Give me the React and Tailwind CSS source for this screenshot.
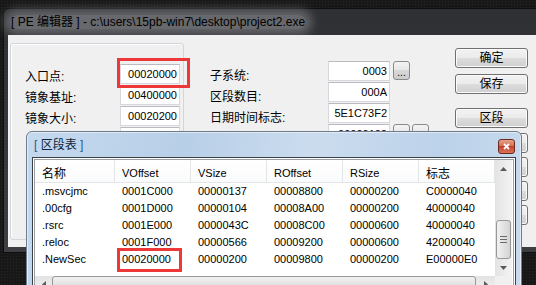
import React from "react";

const FONT = { fontFamily: '"Liberation Sans", "Noto Sans CJK SC", sans-serif' };

// fields from row 4 on lie behind the dialog, only their boxes are drawn
const leftFields = [
  ["入口点:", "00020000"],
  ["镜象基址:", "00400000"],
  ["镜象大小:", "00020200"],
  ["", "00001000"],
  ["", ""],
  ["", ""],
  ["", ""],
  ["", ""],
];

const rightFields = [
  ["子系统:", "0003", 1],
  ["区段数目:", "000A", 0],
  ["日期时间标志:", "5E1C73F2", 0],
  ["", "00000102", 2],
  ["", "", 0],
  ["", "", 0],
  ["", "", 0],
];

const buttons = [
  ["确定", "mt-0"],
  ["保存", "mt-[6px]"],
  ["区段", "mt-[14px]"],
  ["", "mt-[5px]"],
  ["", "mt-[4px]"],
  ["", "mt-[4px]"],
  ["", "mt-[4px]"],
];

const cols = [
  ["名称", "w-[80px]"],
  ["VOffset", "w-[76px]"],
  ["VSize", "w-[76px]"],
  ["ROffset", "w-[76px]"],
  ["RSize", "w-[76px]"],
  ["标志", "w-[76px]"],
];

const rows = [
  [".msvcjmc", "0001C000", "00000137", "00008800", "00000200", "C0000040"],
  [".00cfg", "0001D000", "00000104", "00008A00", "00000200", "40000040"],
  [".rsrc", "0001E000", "0000043C", "00008C00", "00000600", "40000040"],
  [".reloc", "0001F000", "00000566", "00009200", "00000600", "42000040"],
  [".NewSec", "00020000", "00000200", "00009800", "00000200", "E00000E0"],
];

function Edit({ value, w }) {
  return (
    <div
      className={`${w} h-[20px] shrink-0 bg-white border border-[#d6d8dd] border-t-[#b9bbc0] flex items-center justify-end pr-[2px] text-[11px] text-black`}
    >
      {value}
    </div>
  );
}

function SmallBtn() {
  return (
    <div className="w-[17px] h-[19px] rounded-[3px] border border-[#8a8a8a] bg-[linear-gradient(#f4f4f4,#e6e6e6_50%,#d8d8d8_50%,#cdcdcd)] flex items-end justify-center text-[10px] leading-[13px] text-black">
      ...
    </div>
  );
}

function Button({ label, cls }) {
  return (
    <div
      className={`${cls} w-[73px] h-[20px] rounded-[3px] border border-[#707070] bg-[linear-gradient(#f2f2f2,#ebebeb_50%,#dddddd_50%,#cfcfcf)] shadow-[inset_0_0_0_1px_#fbfbfb] flex items-center justify-center text-[12px] text-black`}
    >
      {label}
    </div>
  );
}

function Arrow({ dir }) {
  const pts = {
    up: "0,4 3.5,0 7,4",
    down: "0,0 3.5,4 7,0",
    left: "4,0 0,3.5 4,7",
    right: "0,0 4,3.5 0,7",
  }[dir];
  const vert = dir === "up" || dir === "down";
  return (
    <svg width={vert ? 7 : 4} height={vert ? 4 : 7}>
      <polygon points={pts} fill="#5a5a5a" />
    </svg>
  );
}

export default function App() {
  return (
    <div
      className="relative w-[536px] h-[285px] overflow-hidden bg-[#181818] bg-[radial-gradient(#262626_1px,transparent_1px)] bg-[length:3px_3px]"
      style={FONT}
    >
      {/* main window */}
      <div className="absolute left-[3px] top-[8px] w-[540px] h-[245px] rounded-t-[6px] border border-[#0e0e0e] bg-[linear-gradient(#2e3033,#3c3e41)] flex flex-col">
        <div className="h-[26px] flex items-center pl-[6px]">
          <span className="rounded-[10px] bg-[rgba(150,152,156,0.55)] shadow-[0_0_10px_6px_rgba(150,152,156,0.5)] px-[1px] text-[12px] text-black leading-[14px]">
            [ PE 编辑器 ] - c:\users\15pb-win7\desktop\project2.exe
          </span>
        </div>
        <div className="flex-1 ml-[4px] mb-[5px] bg-[#f0f0f0] flex">
          {/* left group */}
          <div className="ml-[2px] mt-[8px] w-[174px] h-[197px] rounded-[3px] border border-[#d0d6dc] shadow-[inset_1px_1px_0_#ffffff] pt-[20px] pl-[14px] flex flex-col gap-[1px]">
            {leftFields.map(([l, v], i) => (
              <div key={i} className="flex items-start h-[20px]">
                <div className="w-[95px] pt-[6px] text-[12px] leading-[14px] text-black">{l}</div>
                <Edit value={v} w="w-[60px]" />
              </div>
            ))}
          </div>
          {/* right fields */}
          <div className="ml-[26px] mt-[26px] w-[220px] flex flex-col gap-[1px]">
            {rightFields.map(([l, v, b], i) => (
              <div key={i} className="flex items-start h-[20px]">
                <div className="w-[118px] pt-[8px] text-[12px] leading-[14px] text-black">{l}</div>
                <Edit value={v} w="w-[62px]" />
                {b > 0 && (
                  <div className="ml-[3px] flex gap-[2px]">
                    <SmallBtn />
                    {b > 1 && <SmallBtn />}
                  </div>
                )}
              </div>
            ))}
          </div>
          {/* buttons */}
          <div className="ml-[25px] mt-[13px] flex flex-col">
            {buttons.map(([l, c], i) => (
              <Button key={i} label={l} cls={c} />
            ))}
          </div>
        </div>
      </div>

      {/* section table dialog */}
      <div className="absolute z-10 left-[26px] top-[131px] w-[496px] h-[175px] rounded-t-[6px] border border-[#6d7b8a] bg-[linear-gradient(100deg,#c4d9ee,#b8cfe8_30%,#cbdcee_55%,#bcd2ea_80%,#c9dbee)] shadow-[inset_0_0_0_1px_rgba(255,255,255,0.5)] flex flex-col">
        <div className="h-[25px] flex items-start justify-between pl-[7px] pr-[6px] pt-[6px]">
          <span className="text-[12px] text-[#10243a] leading-[14px]">
            <span className="text-[#2a5a8a]">[</span> 区段表 <span className="text-[#2a5a8a]">]</span>
          </span>
          <div className="mt-[1px] w-[17px] h-[15px] rounded-[3px] border border-[#6b2a1c] bg-[linear-gradient(#e8a08a,#d36b50_50%,#c2452b_50%,#d9735a)] flex items-center justify-center">
            <svg width="7" height="7" viewBox="0 0 7 7">
              <path d="M1 1 L6 6 M6 1 L1 6" stroke="#ffffff" strokeWidth="1.8" />
            </svg>
          </div>
        </div>
        <div className="mx-[5px] w-[484px] flex-1 border border-[#3d4043] bg-white p-[1px]">
          <div className="h-full border border-[#9aa0a8] bg-white flex flex-col">
            <div className="flex h-[116px]">
              <div className="w-[460px] flex flex-col">
                <div className="flex h-[23px] border-b border-[#e5e5e5] bg-[linear-gradient(#ffffff,#fafbfc)]">
                  {cols.map(([c, w]) => (
                    <div
                      key={c}
                      className={`${w} h-full border-r border-[#e5e5e5] pl-[7px] pt-[5px] ${
                        /[A-Za-z]/.test(c) ? "text-[11px]" : "text-[12px]"
                      } text-black`}
                    >
                      {c}
                    </div>
                  ))}
                </div>
                {rows.map((r) => (
                  <div key={r[0]} className="flex h-[17px] items-center">
                    {r.map((v, i) => (
                      <div key={i} className={`${cols[i][1]} pl-[7px] text-[11px] text-black`}>
                        {v}
                      </div>
                    ))}
                  </div>
                ))}
              </div>
              {/* vertical scrollbar */}
              <div className="w-[17px] h-full bg-[linear-gradient(90deg,#e3e3e3,#f3f3f3)] flex flex-col">
                <div className="h-[17px] flex items-center justify-center">
                  <Arrow dir="up" />
                </div>
                <div className="flex-1 flex flex-col justify-end px-[1px]">
                  <div className="h-[39px] rounded-[3px] border border-[#979797] bg-[linear-gradient(90deg,#f2f2f2,#e2e2e2_50%,#d4d4d4)] flex flex-col items-center justify-center gap-[2px]">
                    <div className="w-[7px] h-[1px] bg-[#6a6a6a]" />
                    <div className="w-[7px] h-[1px] bg-[#6a6a6a]" />
                    <div className="w-[7px] h-[1px] bg-[#6a6a6a]" />
                  </div>
                </div>
                <div className="h-[17px] flex items-center justify-center">
                  <Arrow dir="down" />
                </div>
              </div>
            </div>
            {/* horizontal scrollbar */}
            <div className="flex h-[17px]">
              <div className="w-[460px] h-full bg-[linear-gradient(#e3e3e3,#f3f3f3)] flex">
                <div className="w-[17px] flex items-center justify-center">
                  <Arrow dir="left" />
                </div>
                <div className="w-[424px] rounded-[3px] border border-[#979797] bg-[linear-gradient(#f2f2f2,#e2e2e2_50%,#d4d4d4)]" />
                <div className="flex-1 flex items-center justify-center">
                  <Arrow dir="right" />
                </div>
              </div>
              <div className="w-[17px] bg-[#f0f0f0]" />
            </div>
          </div>
        </div>
      </div>

      {/* red highlights */}
      <div className="absolute z-20 left-[117px] top-[58px] w-[73px] h-[30px] border-[3px] border-[#ec3838]" />
      <div className="absolute z-20 left-[117px] top-[248px] w-[65px] h-[24px] border-[3px] border-[#ec3838]" />
    </div>
  );
}
